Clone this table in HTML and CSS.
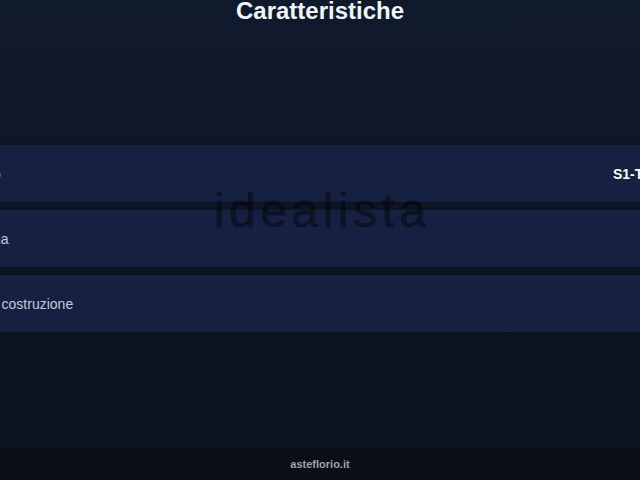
FILE: index.html
```html
<!DOCTYPE html>
<html lang="it">
<head>
<meta charset="utf-8">
<title>Caratteristiche</title>
<link rel="stylesheet" href="styles.css">
</head>
<body>
  <main class="page">
    <h1 class="title">Caratteristiche</h1>
    <section class="list">
      <div class="row">
        <span class="label">Piano</span>
        <span class="value">S1-T-1</span>
      </div>
      <div class="row">
        <span class="label">Cucina</span>
        <span class="value value-dim">Sì</span>
      </div>
      <div class="row">
        <span class="label">Anno costruzione</span>
        <span class="value"></span>
      </div>
    </section>
  </main>
  <footer class="footer">asteflorio.it</footer>
  <div class="watermark">idealista</div>
</body>
</html>
```

FILE: styles.css
```css
html, body {
  margin: 0;
  padding: 0;
}

body {
  width: 640px;
  height: 480px;
  overflow: hidden;
  position: relative;
  display: flex;
  flex-direction: column;
  background: linear-gradient(180deg, #101a2d 0%, #0e1626 50%, #0b111d 100%);
  font-family: "Liberation Sans", Arial, sans-serif;
  color: #cbd5e1;
}

.page {
  flex: 1;
  display: flex;
  flex-direction: column;
}

.title {
  margin: 0;
  font-size: 24px;
  line-height: 22px;
  font-weight: 700;
  text-align: center;
  color: #f1f5f9;
}

.list {
  margin: 123px -31px 0 -51px;
  display: flex;
  flex-direction: column;
  gap: 8px;
}

.row {
  height: 57px;
  padding: 0 16px;
  display: flex;
  align-items: center;
  justify-content: space-between;
  background: #162142;
  box-shadow: 0 0 3px rgba(5, 10, 20, 0.5);
  font-size: 14px;
}

.label {
  color: #c3cad8;
}

.value {
  font-weight: 700;
  color: #ffffff;
}

.value-dim {
  font-weight: 400;
  color: #4b5575;
}

.footer {
  height: 32px;
  flex: none;
  display: flex;
  align-items: center;
  justify-content: center;
  background: #0a0e17;
  border-top: 1px solid #0f1520;
  font-size: 11px;
  font-weight: 700;
  color: #9ca3af;
}

.watermark {
  position: absolute;
  left: 0;
  right: 0;
  top: 187px;
  text-align: center;
  font-size: 48px;
  line-height: 48px;
  letter-spacing: 4.5px;
  text-indent: 4.5px;
  color: rgba(0, 0, 0, 0.42);
  -webkit-text-stroke: 0.6px rgba(0, 0, 0, 0.42);
  pointer-events: none;
}
```
